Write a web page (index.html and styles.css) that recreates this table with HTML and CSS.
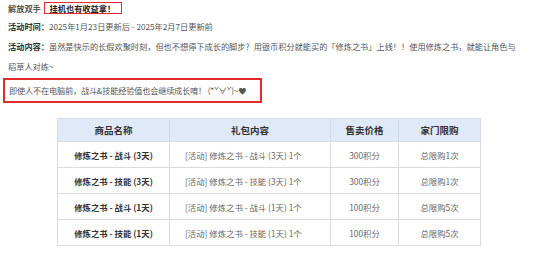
FILE: index.html
```html
<!DOCTYPE html>
<html lang="zh">
<head>
<meta charset="utf-8">
<link rel="stylesheet" href="styles.css">
</head>
<body>
<div class="page">
  <p class="line first"><span class="label soft">解放双手</span> <span class="hl">挂机也有收益拿！</span></p>
  <p class="line second"><span class="label">活动时间：</span>2025年1月23日更新后 - 2025年2月7日更新前</p>
  <p class="line wrap"><span class="label">活动内容：</span>虽然是快乐的长假欢聚时刻，但也不想停下成长的脚步？用银币积分就能买的「修炼之书」上线！！使用修炼之书，就能让角色与稻草人对练~</p>
  <p class="note">即使人不在电脑前，战斗&amp;技能经验值也会继续成长唷！ (*ˇ∀ˇ)~♥</p>
  <table class="shop">
    <thead>
      <tr><th class="c1">商品名称</th><th class="c2">礼包内容</th><th class="c3">售卖价格</th><th class="c4">家门限购</th></tr>
    </thead>
    <tbody>
      <tr><td class="name">修炼之书 - 战斗 (3天)</td><td class="pack">[活动] 修炼之书 - 战斗 (3天) 1个</td><td>300积分</td><td>总限购1次</td></tr>
      <tr><td class="name">修炼之书 - 技能 (3天)</td><td class="pack">[活动] 修炼之书 - 技能 (3天) 1个</td><td>300积分</td><td>总限购1次</td></tr>
      <tr><td class="name">修炼之书 - 战斗 (1天)</td><td class="pack">[活动] 修炼之书 - 战斗 (1天) 1个</td><td>100积分</td><td>总限购5次</td></tr>
      <tr><td class="name">修炼之书 - 技能 (1天)</td><td class="pack">[活动] 修炼之书 - 技能 (1天) 1个</td><td>100积分</td><td>总限购5次</td></tr>
    </tbody>
  </table>
</div>
</body>
</html>
```
FILE: styles.css
```css
html, body {
  margin: 0;
  padding: 0;
  background: #fff;
}
body {
  font-family: "Noto Sans CJK SC", "Noto Sans", sans-serif;
  font-size: 8.2px;
  color: #555;
}
.page {
  padding: 0 3px;
}
.line {
  margin: 0;
  padding: 0 5px;
  overflow: visible;
}
.first {
  height: 17px;
  line-height: 17px;
}
.second {
  height: 19px;
  line-height: 19px;
}
.wrap {
  width: 513px;
  height: 40px;
  line-height: 20px;
}
.label {
  font-weight: bold;
  color: #333;
}
.label.soft {
  color: #555;
}
.hl {
  display: inline-block;
  vertical-align: middle;
  font-weight: bold;
  color: #222;
  border: 1.5px solid #e02c2c;
  padding: 0 6px 0 5px;
  line-height: 10px;
  margin-left: 1px;
  margin-top: -3px;
}
.note {
  margin: 2px 0 0;
  box-sizing: border-box;
  width: 259px;
  height: 25px;
  white-space: nowrap;
  border: 2px solid #e02c2c;
  padding: 0 4px;
  line-height: 21px;
  color: #555;
  letter-spacing: -0.2px;
}
.shop {
  margin: 15px 0 0 54px;
  border-collapse: collapse;
  width: 419px;
  table-layout: fixed;
  font-size: 8.4px;
  color: #666;
}
.shop th, .shop td {
  border: 1px solid #dcdcdf;
  text-align: center;
  padding: 0;
  line-height: 12px;
}
.shop th {
  background: #dfe9f8;
  color: #333;
  font-size: 9.5px;
  font-weight: bold;
  height: 22px;
  border-color: #d3dbe8;
}
.shop td {
  height: 25px;
}
.shop td.name {
  color: #333;
  font-weight: bold;
}
.shop td.pack {
  text-align: left;
  padding-left: 15px;
}
.c1 { width: 111px; }
.c2 { width: 160px; }
.c3 { width: 67px; }
.c4 { width: 81px; }
```
